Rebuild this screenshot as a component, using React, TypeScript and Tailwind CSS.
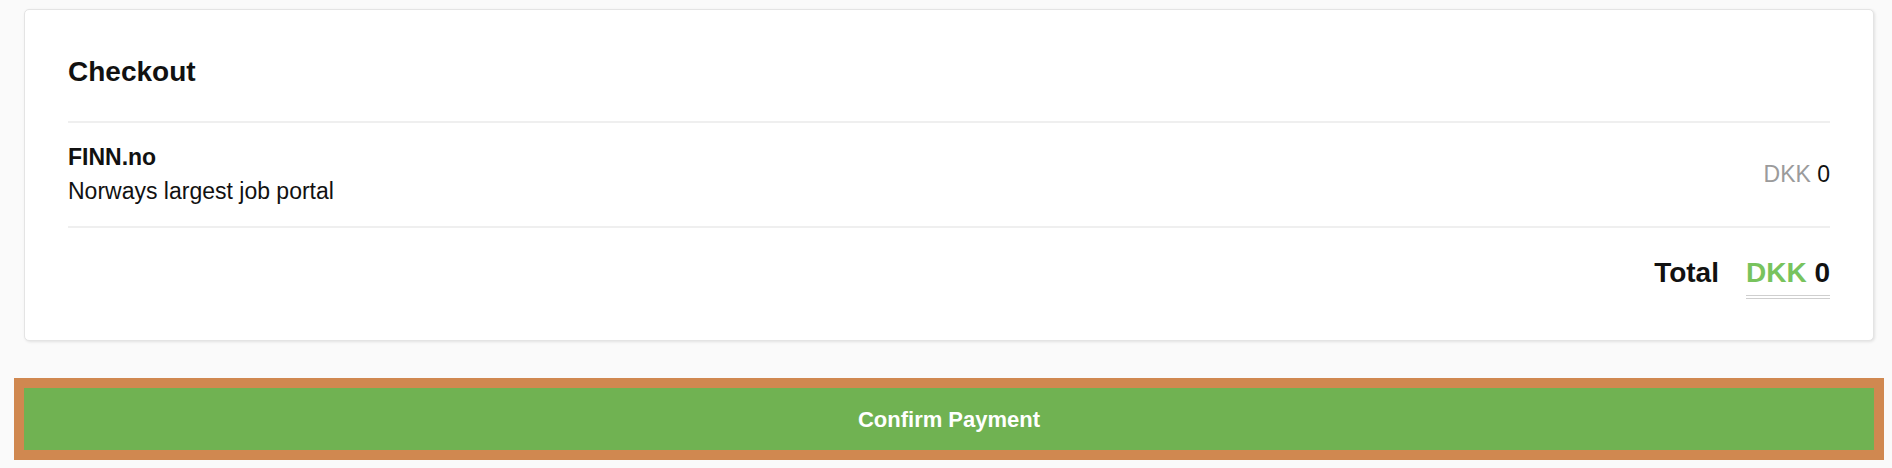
import React from 'react';

const items = [{ name: 'FINN.no', description: 'Norways largest job portal', currency: 'DKK', amount: 0 }];

export default function App() {
  const total = items.reduce((sum, i) => sum + i.amount, 0);

  return (
    <div className="min-h-[468px] w-full bg-[#fafafa] pl-[24px] pr-[18px] pt-[9px] text-[#111] font-['Liberation_Sans',Arial,sans-serif]">
      {/* Checkout card */}
      <div className="rounded-[5px] border border-[#e4e4e4] bg-white px-[43px] shadow-[1px_1px_3px_rgba(0,0,0,0.1)]">
        <div className="border-b-2 border-[#efefef] pt-[45px] pb-[32px]">
          <h2 className="text-[28px] leading-[34px] font-bold">Checkout</h2>
        </div>

        {items.map(item => (
          <div key={item.name} className="flex items-center justify-between border-b-2 border-[#efefef] pt-[17px] pb-[18px]">
            <div className="text-[23px] leading-[34px]">
              <p className="font-bold">{item.name}</p>
              <p>{item.description}</p>
            </div>
            <div className="text-[23px] leading-[34px]">
              <span className="text-[#9b9b9b]">{item.currency}</span> {item.amount}
            </div>
          </div>
        ))}

        <div className="flex justify-end items-start gap-[27px] pt-[28px] pb-[41px] text-[28px] leading-[34px] font-bold">
          <span>Total</span>
          <span className="inline-block border-b-4 border-double border-[#cfcfcf] pb-[5px]">
            <span className="text-[#78c35d]">DKK</span> {total}
          </span>
        </div>
      </div>

      {/* Confirm */}
      <button className="mt-[47px] flex h-[62px] w-full items-center justify-center bg-[#70b252] text-[22px] font-bold text-white ring-[10px] ring-[#d08850]">
        Confirm Payment
      </button>
    </div>
  );
}
